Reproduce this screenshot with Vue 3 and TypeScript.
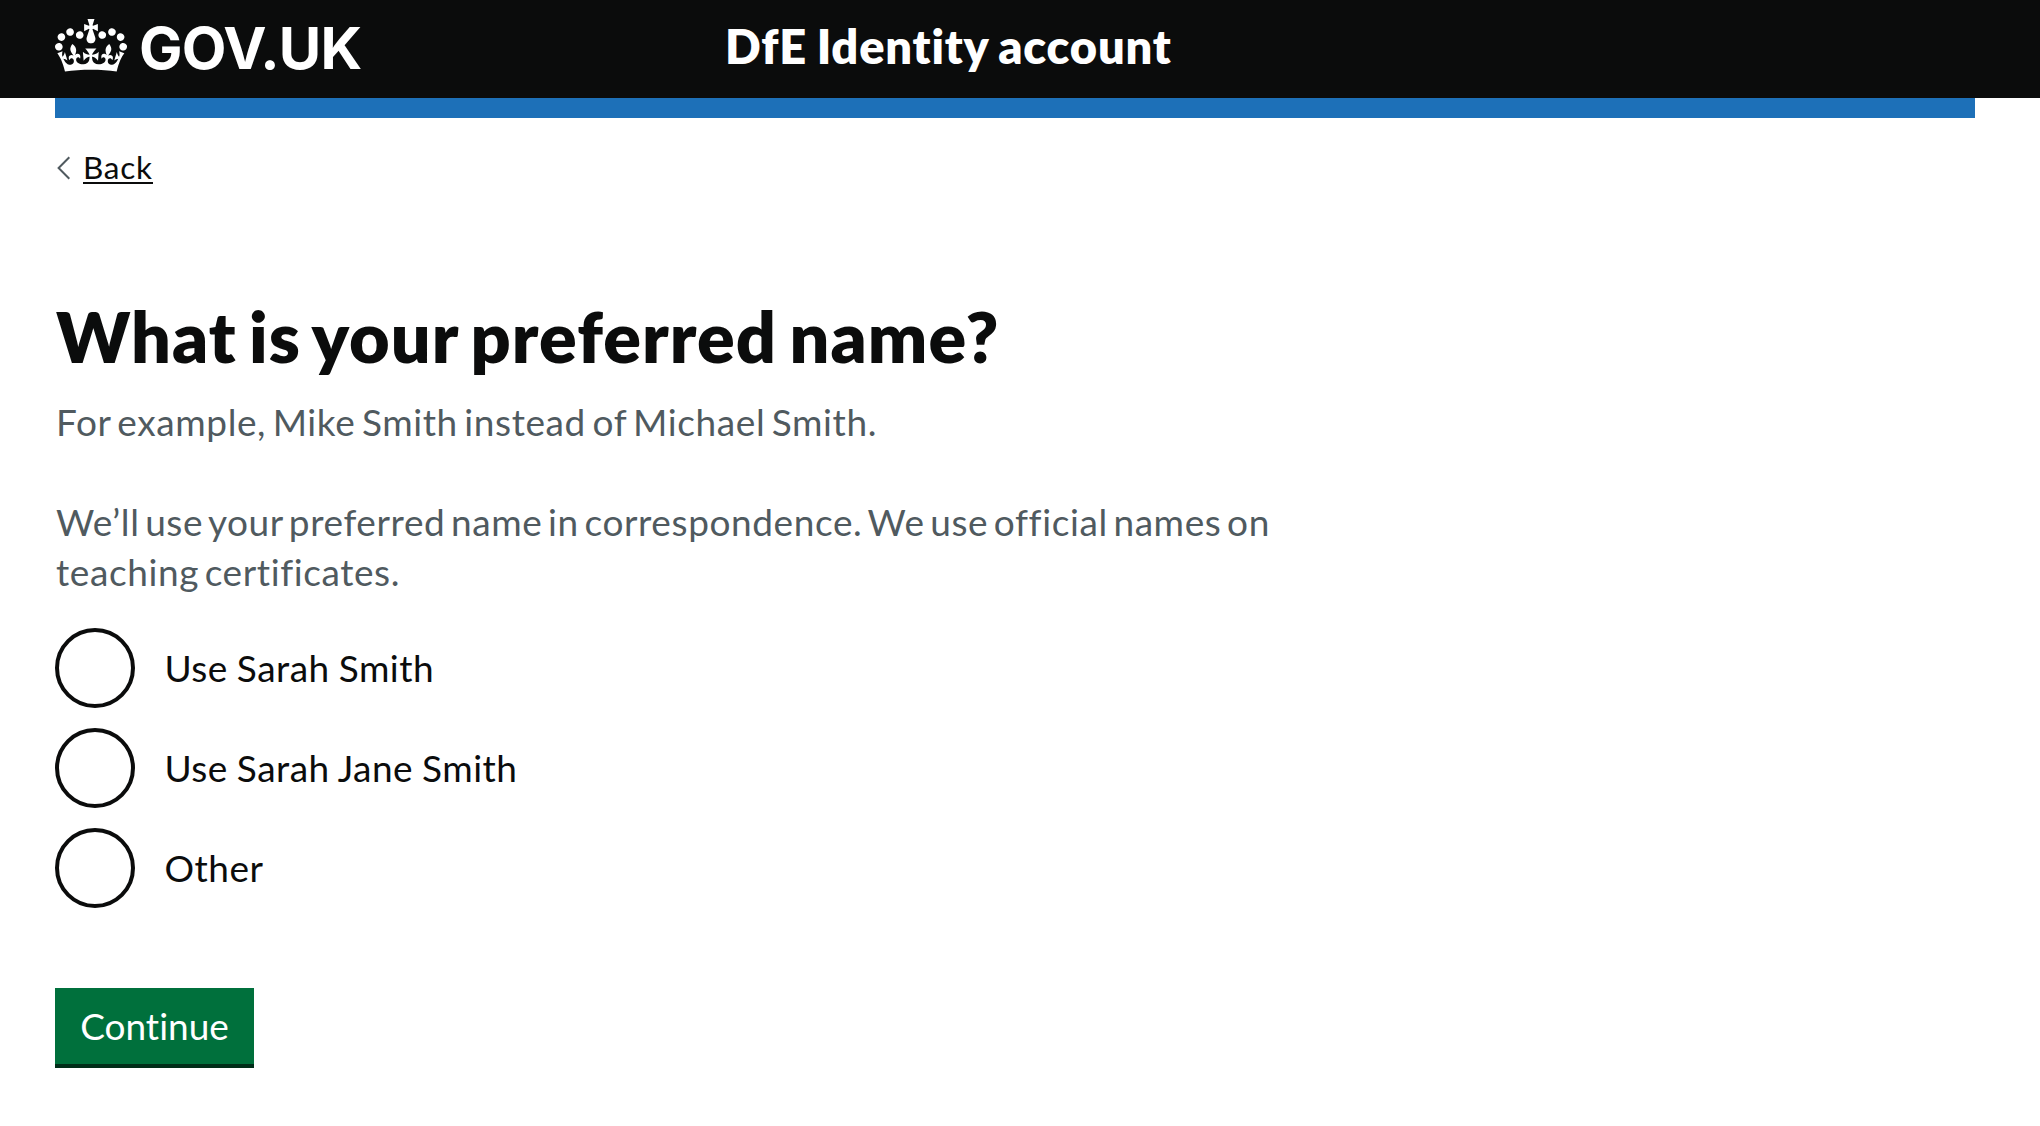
<script setup lang="ts">
import { ref } from 'vue'

interface NameOption {
  value: string
  label: string
}

const options: NameOption[] = [
  { value: 'first-last', label: 'Use Sarah Smith' },
  { value: 'full', label: 'Use Sarah Jane Smith' },
  { value: 'other', label: 'Other' },
]

const selected = ref<string>('')
</script>

<template>
  <div class="page">
    <header class="header">
      <div class="header-inner">
        <a class="logo">
          <svg class="crown" viewBox="0 0 132 97" aria-hidden="true">
            <path
              fill="currentColor"
              fill-rule="evenodd"
              d="M25 30.2c3.5 1.5 7.7-.2 9.1-3.7 1.5-3.6-.2-7.8-3.9-9.2-3.6-1.4-7.6.3-9.1 3.9-1.4 3.5.3 7.5 3.9 9zM9 39.5c3.6 1.5 7.8-.2 9.2-3.7 1.5-3.6-.2-7.8-3.9-9.1-3.6-1.5-7.6.2-9.1 3.8-1.4 3.5.3 7.5 3.8 9zM4.4 57.2c3.5 1.5 7.7-.2 9.1-3.8 1.5-3.6-.2-7.7-3.9-9.1-3.5-1.5-7.6.3-9.1 3.8-1.4 3.5.3 7.6 3.9 9.1zm38.3-21.4c3.5 1.5 7.7-.2 9.1-3.8 1.5-3.6-.2-7.7-3.9-9.1-3.6-1.5-7.6.3-9.1 3.8-1.3 3.6.4 7.7 3.9 9.1zm64.4-5.6c-3.6 1.5-7.8-.2-9.1-3.7-1.5-3.6.2-7.8 3.8-9.2 3.6-1.4 7.7.3 9.2 3.9 1.3 3.5-.4 7.5-3.9 9zm15.9 9.3c-3.6 1.5-7.7-.2-9.1-3.7-1.5-3.6.2-7.8 3.7-9.1 3.6-1.5 7.7.2 9.2 3.8 1.5 3.5-.3 7.5-3.8 9zm4.7 17.7c-3.6 1.5-7.8-.2-9.2-3.8-1.5-3.6.2-7.7 3.9-9.1 3.6-1.5 7.7.3 9.2 3.8 1.3 3.5-.4 7.6-3.9 9.1zM89.3 35.8c-3.6 1.5-7.8-.2-9.2-3.8-1.4-3.6.2-7.7 3.9-9.1 3.6-1.5 7.7.3 9.2 3.8 1.4 3.6-.3 7.7-3.9 9.1zM69.7 17.7l8.9 4.7V9.3l-8.9 2.8c-.2-.3-.5-.6-.9-.9L72.4 0H59.6l3.5 11.2c-.3.3-.6.5-.9.9l-8.8-2.8v13.1l8.8-4.7c.3.3.6.7.9.9l-5 15.4v.1c-.2.8-.4 1.6-.4 2.4 0 4.1 3.1 7.5 7 8.1h.2c.3 0 .7.1 1 .1.4 0 .7 0 1-.1h.2c4-.6 7.1-4.1 7.1-8.1 0-.8-.1-1.7-.4-2.4V34l-5.1-15.4c.4-.2.7-.6 1-.9zM66 92.8c16.9 0 32.8 1.1 47.1 3.2 4-16.9 8.9-26.7 14-33.5l-9.6-3.4c1 4.9 1.1 7.2 0 10.2-1.5-1.4-3-4.3-4.2-8.7L108.6 76c2.8-2 5-3.2 7.5-3.3-4.4 9.4-10 11.9-13.6 11.2-4.3-.8-6.3-4.6-5.6-7.9 1-4.7 5.7-5.9 8-.5 4.3-8.7-3-11.4-7.6-8.8 7.1-7.2 7.9-13.5 2.1-21.1-8 6.1-8.1 12.3-4.5 20.8-4.7-5.4-12.1-2.5-9.5 6.2 3.4-5.2 7.9-2 7.2 3.1-.6 4.3-6.4 7.8-13.5 7.2-10.3-.9-10.9-8-11.2-13.8 2.5-.5 7.1 1.8 11 7.3L80.2 60c-4.1 4.4-8 5.3-12.3 5.4 1.4-4.4 8-11.6 8-11.6H55.5s6.4 7.2 7.9 11.6c-4.2-.1-8-1-12.3-5.4l1.4 16.4c3.9-5.5 8.5-7.7 10.9-7.3-.3 5.8-.9 12.8-11.1 13.8-7.2.6-12.9-2.9-13.5-7.2-.7-5 3.8-8.3 7.1-3.1 2.7-8.7-4.6-11.6-9.4-6.2 3.7-8.5 3.6-14.7-4.6-20.8-5.8 7.6-5 13.9 2.2 21.1-4.7-2.6-11.9.1-7.7 8.8 2.3-5.5 7.1-4.2 8.1.5.7 3.3-1.3 7.1-5.7 7.9-3.5.7-9-1.8-13.5-11.2 2.5.1 4.7 1.3 7.5 3.3l-4.7-15.4c-1.2 4.4-2.7 7.2-4.3 8.7-1.1-3-.9-5.3 0-10.2l-9.5 3.4c5 6.9 9.9 16.7 14 33.5 14.8-2.1 30.8-3.2 47.7-3.2z"
            />
          </svg>
          <span class="logo-text">GOV.UK</span>
        </a>
        <a class="service">DfE Identity account</a>
      </div>
    </header>

    <div class="container">
      <div class="bar"></div>
      <a class="back">
        <svg class="chevron" viewBox="0 0 14 24" aria-hidden="true">
          <path d="M12.3 1.2 1.6 12l10.7 10.8" fill="none" stroke="#505a5f" stroke-width="2" />
        </svg>
        <span class="back-text">Back</span>
      </a>

      <main class="main">
        <h1 class="title">What is your preferred name?</h1>
        <div class="hint">
          <p class="hint-example">For example, Mike Smith instead of Michael Smith.</p>
          <p class="hint-usage">
            We’ll use your preferred name in correspondence. We use official names on teaching certificates.
          </p>
        </div>
        <div class="radios">
          <label v-for="option in options" :key="option.value" class="radio">
            <input v-model="selected" class="radio-input" type="radio" name="preferred-name" :value="option.value" />
            <span class="radio-label">{{ option.label }}</span>
          </label>
        </div>
        <button class="button" type="button">Continue</button>
      </main>
    </div>
  </div>
</template>

<style>
body {
  background: #fff;
}
</style>

<style scoped>
.page {
  min-height: 1126px;
  font-family: Lato, 'Open Sans', sans-serif;
  font-variant-ligatures: none;
  color: #0b0c0c;
}

.header {
  height: 98px;
  background: #0b0c0c;
  color: #fff;
}

.header-inner,
.container {
  width: 1920px;
  margin-left: 55px;
}

.header-inner {
  display: flex;
  height: 98px;
}

.logo {
  display: flex;
  width: 670px;
}

.crown {
  width: 72px;
  height: 53px;
  margin-top: 19px;
}

.logo-text {
  margin-left: 12px;
  font-family: Inter, sans-serif;
  font-size: 58px;
  font-weight: 700;
  line-height: 96px;
  letter-spacing: -0.8px;
  white-space: nowrap;
}

.service {
  font-size: 47px;
  font-weight: 800;
  line-height: 92px;
  letter-spacing: 0.8px;
  word-spacing: -2px;
  white-space: nowrap;
}

.bar {
  height: 20px;
  background: #1d70b8;
}

.back {
  display: flex;
  width: max-content;
  height: 40px;
  margin-top: 29px;
}

.chevron {
  width: 14px;
  height: 24px;
  margin: 9px 11px 0 2px;
}

.back-text {
  height: 37px;
  border-bottom: 2px solid #0b0c0c;
  box-sizing: border-box;
  font-size: 31.5px;
  line-height: 40px;
  letter-spacing: 0.7px;
  margin-left: 1px;
}

.main {
  padding-top: 109px;
}

.title {
  margin: 0 0 0 1px;
  font-size: 70px;
  font-weight: 800;
  line-height: 80px;
  letter-spacing: 1.1px;
  word-spacing: -5px;
  white-space: nowrap;
}

.hint {
  margin: 21px 0 0 1px;
  font-size: 37px;
  line-height: 50px;
  letter-spacing: 0.6px;
  color: #505a5f;
}

.hint p {
  width: 1270px;
  margin: 0;
}

.hint-example {
  word-spacing: -3.5px;
}

.hint .hint-usage {
  margin-top: 50px;
  word-spacing: -4.4px;
}

.radios {
  display: flex;
  flex-direction: column;
  gap: 20px;
  margin-top: 31px;
}

.radio {
  display: flex;
  align-items: center;
  height: 80px;
}

.radio-input {
  appearance: none;
  width: 80px;
  height: 80px;
  margin: 0 29.5px 0 0;
  border: 4px solid #0b0c0c;
  border-radius: 50%;
}

.radio-input:checked {
  background: radial-gradient(circle, #0b0c0c 20px, transparent 21px);
}

.radio-label {
  font-size: 37px;
  line-height: 50px;
  letter-spacing: 0.5px;
  word-spacing: -1px;
}

.button {
  display: block;
  width: 199px;
  height: 80px;
  margin: 80px 0 0;
  padding: 0 0 1px;
  border: 0;
  border-bottom: 4px solid #002d18;
  background: #00703c;
  color: #fff;
  font-family: inherit;
  font-size: 37px;
  font-variant-ligatures: none;
  line-height: 50px;
}
</style>
